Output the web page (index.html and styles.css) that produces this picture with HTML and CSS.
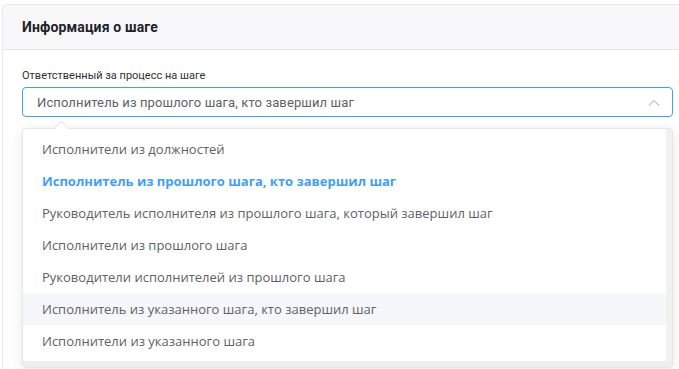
FILE: index.html
```html
<!DOCTYPE html>
<html lang="ru">
<head>
    <meta charset="UTF-8">
    <meta name="viewport" content="width=device-width, initial-scale=1.0">
    <title>Информация о шаге</title>
    <link rel="stylesheet" href="styles.css">
</head>
<body>
    <div class="card">
        <div class="card-header">Информация о шаге</div>
        <div class="card-body">
            <label class="field-label" for="owner">Ответственный за процесс на шаге</label>
            <div class="select">
                <div class="select-input" id="owner">
                    <span>Исполнитель из прошлого шага, кто завершил шаг</span>
                    <svg class="chevron" width="12" height="8" viewBox="0 0 12 8">
                        <path d="M1 6.5 L6 1.5 L11 6.5" fill="none" stroke="#c0c4cc" stroke-width="1.2"/>
                    </svg>
                </div>
                <div class="dropdown">
                    <div class="dropdown-arrow"></div>
                    <ul class="options">
                        <li>Исполнители из должностей</li>
                        <li class="selected">Исполнитель из прошлого шага, кто завершил шаг</li>
                        <li>Руководитель исполнителя из прошлого шага, который завершил шаг</li>
                        <li>Исполнители из прошлого шага</li>
                        <li>Руководители исполнителей из прошлого шага</li>
                        <li class="hover">Исполнитель из указанного шага, кто завершил шаг</li>
                        <li>Исполнители из указанного шага</li>
                    </ul>
                    <div class="scroll-v"></div>
                    <div class="scroll-h"></div>
                </div>
            </div>
        </div>
    </div>
</body>
</html>
```

FILE: styles.css
```css
html, body {
    margin: 0;
    padding: 0;
    background: #fff;
    overflow: hidden;
}
body {
    font-family: Roboto, "Noto Sans", sans-serif;
    color: #303133;
}
.card {
    margin: 4px 0 0 2px;
    width: 677px;
    height: 365px;
    border: 1px solid #e4e7ed;
    border-right: none;
    border-bottom: none;
    border-radius: 6px 0 0 0;
    box-sizing: border-box;
}
.card-header {
    height: 44px;
    line-height: 44px;
    padding-left: 19px;
    background: #f8f8fa;
    border-bottom: 1px solid #e4e7ed;
    border-radius: 6px 0 0 0;
    font-size: 14px;
    font-weight: bold;
    letter-spacing: 0.15px;
    color: #1f2329;
}
.card-body {
    padding: 19px 0 0 19px;
}
.field-label {
    display: block;
    font-size: 11px;
    line-height: 14px;
    color: #303133;
    margin-bottom: 4px;
}
.select {
    position: relative;
    width: 651px;
}
.select-input {
    height: 30px;
    box-sizing: border-box;
    border: 1px solid #409eff;
    border-radius: 4px;
    display: flex;
    align-items: center;
    justify-content: space-between;
    padding: 0 12px 0 14px;
    font-size: 13px;
    letter-spacing: 0.12px;
    color: #606266;
}
.chevron {
    margin-top: 1px;
}
.dropdown {
    position: absolute;
    top: 41px;
    left: 0;
    width: 651px;
    box-sizing: border-box;
    border: 1px solid #e4e7ed;
    border-radius: 4px;
    background: #fff;
    box-shadow: 0 2px 12px rgba(0, 0, 0, 0.1);
    padding: 4px 6px 10px 0;
}
.dropdown-arrow {
    position: absolute;
    top: -6px;
    left: 33px;
    width: 10px;
    height: 10px;
    background: #fff;
    border-left: 1px solid #e4e7ed;
    border-top: 1px solid #e4e7ed;
    transform: rotate(45deg);
}
.options {
    list-style: none;
    margin: 0;
    padding: 0;
}
.options li {
    height: 32px;
    line-height: 32px;
    padding-left: 19px;
    font-family: "Open Sans", sans-serif;
    font-size: 13px;
    color: #606266;
    white-space: nowrap;
}
.options li.selected {
    color: #409eff;
    font-weight: bold;
}
.options li.hover {
    background: #f5f7fa;
}
.scroll-v {
    position: absolute;
    top: 0;
    right: 0;
    width: 6px;
    bottom: 6px;
    background: #f1f1f1;
}
.scroll-h {
    position: absolute;
    left: 0;
    right: 0;
    bottom: 0;
    height: 6px;
    background: #eeeeee;
}
```
